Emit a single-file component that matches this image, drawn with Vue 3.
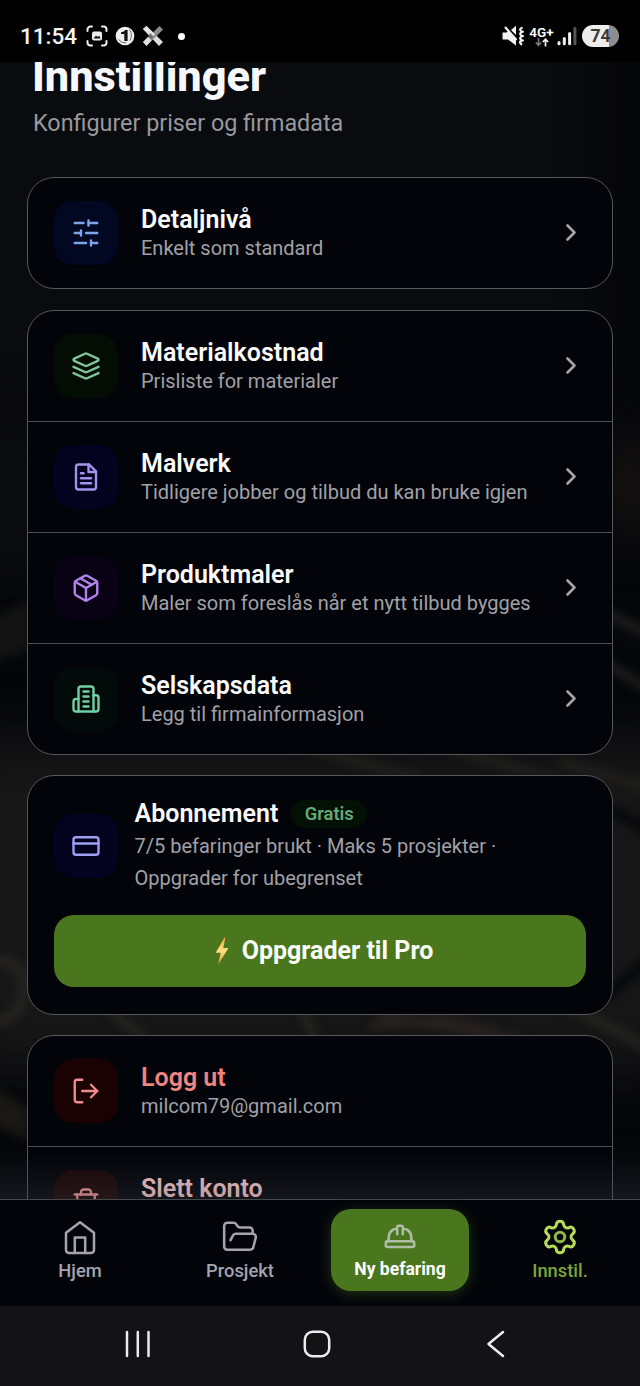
<script setup>
const icons = {
  sliders: ['M21 4h-7', 'M10 4H3', 'M21 12h-9', 'M8 12H3', 'M21 20h-5', 'M12 20H3', 'M14 2v4', 'M8 10v4', 'M16 18v4'],
  layers: [
    'm12.83 2.18a2 2 0 0 0-1.66 0L2.6 6.08a1 1 0 0 0 0 1.83l8.58 3.91a2 2 0 0 0 1.66 0l8.58-3.9a1 1 0 0 0 0-1.83Z',
    'm22 17.65-9.17 4.16a2 2 0 0 1-1.66 0L2 17.65',
    'm22 12.65-9.17 4.16a2 2 0 0 1-1.66 0L2 12.65',
  ],
  file: ['M14.5 2H6a2 2 0 0 0-2 2v16a2 2 0 0 0 2 2h12a2 2 0 0 0 2-2V7.5L14.5 2z', 'M14 2v6h6', 'M10 9H8', 'M16 13H8', 'M16 17H8'],
  box: [
    'm7.5 4.27 9 5.15',
    'M21 8a2 2 0 0 0-1-1.73l-7-4a2 2 0 0 0-2 0l-7 4A2 2 0 0 0 3 8v8a2 2 0 0 0 1 1.73l7 4a2 2 0 0 0 2 0l7-4A2 2 0 0 0 21 16Z',
    'm3.3 7 8.7 5 8.7-5',
    'M12 22V12',
  ],
  building: [
    'M6 22V4a2 2 0 0 1 2-2h8a2 2 0 0 1 2 2v18Z',
    'M6 12H4a2 2 0 0 0-2 2v6a2 2 0 0 0 2 2h2',
    'M18 9h2a2 2 0 0 1 2 2v9a2 2 0 0 1-2 2h-2',
    'M10 6h4', 'M10 10h4', 'M10 14h4', 'M10 18h4',
  ],
  logout: ['M9 21H5a2 2 0 0 1-2-2V5a2 2 0 0 1 2-2h4', 'm16 17 5-5-5-5', 'M21 12H9'],
  trash: ['M3 6h18', 'M19 6v14c0 1-1 2-2 2H7c-1 0-2-1-2-2V6', 'M8 6V4c0-1 1-2 2-2h4c1 0 2 1 2 2v2', 'M10 11v6', 'M14 11v6'],
}

const groups = [
  [{ icon: 'sliders', tone: 'blue', title: 'Detaljnivå', sub: 'Enkelt som standard' }],
  [
    { icon: 'layers', tone: 'green', title: 'Materialkostnad', sub: 'Prisliste for materialer' },
    { icon: 'file', tone: 'indigo', title: 'Malverk', sub: 'Tidligere jobber og tilbud du kan bruke igjen' },
    { icon: 'box', tone: 'purple', title: 'Produktmaler', sub: 'Maler som foreslås når et nytt tilbud bygges' },
    { icon: 'building', tone: 'teal', title: 'Selskapsdata', sub: 'Legg til firmainformasjon' },
  ],
]

const account = [
  { icon: 'logout', tone: 'red', title: 'Logg ut', sub: 'milcom79@gmail.com' },
  { icon: 'trash', tone: 'rose', title: 'Slett konto', sub: '' },
]
</script>

<template>
  <div class="screen">
    <svg class="photo" viewBox="0 0 640 1386" aria-hidden="true">
      <defs>
        <filter id="soft" x="-20%" y="-20%" width="140%" height="140%" color-interpolation-filters="sRGB"><feGaussianBlur stdDeviation="5" /></filter>
        <filter id="wide" x="-50%" y="-50%" width="200%" height="200%" color-interpolation-filters="sRGB"><feGaussianBlur stdDeviation="28" /></filter>
      </defs>
      <g filter="url(#wide)">
        <rect x="-60" y="0" width="660" height="400" fill="#0a0b0e" />
        <rect x="-40" y="420" width="100" height="160" fill="#0c0d0f" />
        <rect x="-50" y="740" width="740" height="330" fill="#171717" />
        <rect x="590" y="440" width="80" height="90" fill="#151210" />
      </g>
      <g filter="url(#soft)" fill="none">
        <path d="M-10 620 L30 600 L30 650 L-10 662Z" fill="#131313" />
        <path d="M600 610 L650 635 M600 660 L650 690 M300 745 L420 780 M440 745 L560 782 M560 762 L650 788" stroke="#21201e" stroke-width="9" />
        <path d="M600 630 L650 652 M610 810 L650 830 M600 1000 L650 960" stroke="#07080c" stroke-width="12" />
        <path d="M-20 962 Q28 955 24 990 T-10 1020" stroke="#272622" stroke-width="9" />
        <path d="M110 1010 L150 1045 M300 1005 L320 1050 M380 1015 L520 1040 M560 1000 L650 1050" stroke="#272622" stroke-width="8" />
        <path d="M370 1026 L440 1020 L500 1034" stroke="#2a2220" stroke-width="8" />
        <path d="M-10 1085 L30 1110 L30 1140 L-10 1125Z" fill="#1a1815" />
      </g>
    </svg>

    <header class="status">
      <div class="status-left">
        <span class="clock">11:54</span>
        <svg class="s-icon" width="22" height="22" viewBox="0 0 22 22" fill="none" stroke="#eee" stroke-width="2" stroke-linecap="round">
          <path d="M1.5 6V4.5a3 3 0 0 1 3-3H6M16 1.5h1.500a3 3 0 0 1 3 3V6M20.500 16v1.500a3 3 0 0 1-3 3H16M6 20.500H4.500a3 3 0 0 1-3-3V16" />
          <rect x="6" y="6.500" width="10" height="9" rx="2" fill="#eee" stroke="none" />
          <path d="M7.500 13.500l2.500-3 1.700 1.500 1.500-1.300 1.500 2.800z" fill="#111" stroke="none" />
        </svg>
        <svg class="s-icon" width="20" height="20" viewBox="0 0 20 20">
          <circle cx="10" cy="10" r="9.300" fill="#f0f0f0" />
          <path d="M6 6.200q3.500-.3 4-2.200h2.600v11H9.300V8H6z" fill="#111" />
          <path d="M14.500 3.500q3.500 5 .5 11M3.500 13.500q3 4 8 3.500" fill="none" stroke="#444" stroke-width=".8" />
        </svg>
        <svg class="s-icon" width="22" height="22" viewBox="0 0 22 22">
          <path d="M1 4l3.500-3L21 17l-4 4z" fill="#dcdcdc" />
          <path d="M17.500 1L21 4.500 4.500 21 1 17z" fill="#8d8d8d" />
          <path d="M1 4l3.500-3 8.500 8.500-3 3z" fill="#e4e4e4" />
          <path d="M1 17l5-5 3.500 3.500-5 5.500z" fill="#e0e0e0" />
          <path d="M8 8l3.500 3.500L9 14l-2.500-2z" fill="#6b6b6b" />
        </svg>
        <span class="dot"></span>
      </div>
      <div class="status-right">
        <svg width="22" height="22" viewBox="0 0 22 22" fill="none">
          <path d="M.5 7.500h4l2-1.700L14 14v6.500L6 14.500H.5z" fill="#f2f2f2" />
          <path d="M9 5L14 .8V10z" fill="#f2f2f2" />
          <path d="M3 2L14.500 15" stroke="#f2f2f2" stroke-width="2.200" />
          <path d="M20.500 2.500c-3.500 1.500-3 3 0 4.300-3.500 1.500-3 3 0 4.300-3.500 1.500-3 3 0 4.300-3.500 1-3 2.800-.5 4.300" stroke="#f2f2f2" stroke-width="2.200" />
        </svg>
        <div class="net">
          <span>4G+</span>
          <svg width="14" height="9" viewBox="0 0 14 9" fill="none" stroke-width="1.700">
            <path d="M3.500 0v7M.8 4.500L3.500 7.300l2.700-2.800" stroke="#777" />
            <path d="M10.500 8.500v-7M7.800 4l2.700-2.800L13.200 4" stroke="#f2f2f2" />
          </svg>
        </div>
        <svg width="20" height="20" viewBox="0 0 20 20" stroke-width="3" stroke-linecap="round">
          <path d="M2 16.500v1.300M7.300 12.500v5.300M12.600 7.500v10.300" stroke="#f2f2f2" />
          <path d="M17.900 2.500v15.300" stroke="#555" />
        </svg>
        <div class="battery"><span>74</span></div>
      </div>
    </header>

    <main class="content">
      <h1>Innstillinger</h1>
      <p class="lead">Konfigurer priser og firmadata</p>

      <section v-for="(group, g) in groups" :key="g" class="card">
        <div v-for="row in group" :key="row.title" class="row">
          <div class="tile" :class="row.tone">
            <svg viewBox="0 0 24 24"><path v-for="d in icons[row.icon]" :key="d" :d="d" /></svg>
          </div>
          <div class="text">
            <h2>{{ row.title }}</h2>
            <p>{{ row.sub }}</p>
          </div>
          <svg class="chevron" viewBox="0 0 24 24"><path d="m9.200 17.200 5.600-5.600-5.600-5.600" /></svg>
        </div>
      </section>

      <section class="card plan">
        <div class="plan-top">
          <div class="tile violet">
            <svg viewBox="0 0 24 24"><rect x="2" y="5" width="20" height="14" rx="2" /><path d="M2 10h20" /></svg>
          </div>
          <div class="plan-text">
            <div class="plan-head"><h2>Abonnement</h2><span class="badge">Gratis</span></div>
            <p>7/5 befaringer brukt · Maks 5 prosjekter ·<br />Oppgrader for ubegrenset</p>
          </div>
        </div>
        <button class="upgrade">
          <svg width="14" height="28" viewBox="0 0 14 28">
            <defs>
              <linearGradient id="bolt" x1="0" y1="0" x2="0" y2="1">
                <stop offset="0" stop-color="#f5a63a" /><stop offset=".5" stop-color="#ffe183" /><stop offset="1" stop-color="#e5902d" />
              </linearGradient>
            </defs>
            <path d="M9.500.5L.7 15.800h5L3.200 27.500 13.500 11H8.300L10.300.8z" fill="url(#bolt)" />
          </svg>
          <span>Oppgrader til Pro</span>
        </button>
      </section>

      <section class="card">
        <div v-for="row in account" :key="row.title" class="row">
          <div class="tile" :class="row.tone">
            <svg viewBox="0 0 24 24"><path v-for="d in icons[row.icon]" :key="d" :d="d" /></svg>
          </div>
          <div class="text" :class="row.tone + '-text'">
            <h2>{{ row.title }}</h2>
            <p v-if="row.sub">{{ row.sub }}</p>
          </div>
        </div>
      </section>
      <div class="fade"></div>
    </main>

    <nav class="tabs">
      <a class="tab">
        <svg width="38" height="38" viewBox="0 0 38 38" stroke-width="2.500">
          <path d="M19 4.200L33 14.800V32a3 3 0 0 1-3 3H8a3 3 0 0 1-3-3V14.800z" /><path d="M13.800 35V19.500h10.400V35" />
        </svg>
        <span>Hjem</span>
      </a>
      <a class="tab">
        <svg width="38" height="38" viewBox="0 0 24 24" stroke-width="1.600">
          <path d="m6 14 1.500-2.900A2 2 0 0 1 9.240 10H20a2 2 0 0 1 1.940 2.500l-1.540 6a2 2 0 0 1-1.950 1.500H4a2 2 0 0 1-2-2V5a2 2 0 0 1 2-2h3.900a2 2 0 0 1 1.690.9l.81 1.200a2 2 0 0 0 1.670.9H18a2 2 0 0 1 2 2v2" />
        </svg>
        <span>Prosjekt</span>
      </a>
      <a class="tab primary">
        <svg width="34" height="34" viewBox="0 0 24 24" stroke-width="1.800">
          <path d="M2 18a1 1 0 0 0 1 1h18a1 1 0 0 0 1-1v-2a1 1 0 0 0-1-1H3a1 1 0 0 0-1 1v2z" />
          <path d="M10 10V5a1 1 0 0 1 1-1h2a1 1 0 0 1 1 1v5M4 15v-3a6 6 0 0 1 6-6M14 6a6 6 0 0 1 6 6v3" />
        </svg>
        <span>Ny befaring</span>
      </a>
      <a class="tab active">
        <svg width="38" height="38" viewBox="0 0 24 24" stroke-width="1.900">
          <path d="M9.671 4.136a2.340 2.340 0 0 1 4.659 0 2.340 2.340 0 0 0 3.319 1.915 2.340 2.340 0 0 1 2.330 4.033 2.340 2.340 0 0 0 0 3.831 2.340 2.340 0 0 1-2.330 4.033 2.340 2.340 0 0 0-3.319 1.915 2.340 2.340 0 0 1-4.659 0 2.340 2.340 0 0 0-3.320-1.915 2.340 2.340 0 0 1-2.330-4.033 2.340 2.340 0 0 0 0-3.831A2.340 2.340 0 0 1 6.350 6.051a2.340 2.340 0 0 0 3.319-1.915" />
          <circle class="hub" cx="12" cy="12" r="3" />
        </svg>
        <span>Innstil.</span>
      </a>
    </nav>

    <footer class="system">
      <svg width="28" height="28" viewBox="0 0 28 28"><path d="M3 2v24M13.800 2v24M24.500 2v24" /></svg>
      <svg width="28" height="28" viewBox="0 0 28 28"><rect x="1.800" y="1.800" width="24.400" height="24.400" rx="8" /></svg>
      <svg width="28" height="28" viewBox="0 0 28 28"><path d="M21 2L6.500 14 21 26" /></svg>
    </footer>
  </div>
</template>

<style>
body { background: #05060a; }
</style>

<style scoped>
.screen {
  position: relative;
  display: flex;
  flex-direction: column;
  width: 640px;
  height: 1386px;
  overflow: hidden;
  background: #05060a;
  color: #fff;
  font-family: Roboto, "Noto Sans", sans-serif;
}
.photo { position: absolute; inset: 0; width: 640px; height: 1386px; }
h1, h2, p { margin: 0; }

.status {
  position: relative;
  z-index: 2;
  display: flex;
  justify-content: space-between;
  align-items: flex-start;
  flex: none;
  height: 62px;
  box-sizing: border-box;
  padding: 25px 21px 0 20px;
  background: #000;
}
.status-left, .status-right { display: flex; align-items: center; height: 22px; }
.clock { width: 66px; font-size: 22.500px; font-weight: 500; color: #f4f4f4; }
.s-icon { margin-right: 7px; }
.dot { width: 7px; height: 7px; margin-left: 7px; border-radius: 50%; background: #fff; }
.net { display: flex; flex-direction: column; align-items: center; width: 27px; margin: 0 2px 0 4px; font-size: 13.500px; line-height: 12px; font-weight: 600; }
.battery {
  display: flex;
  align-items: center;
  justify-content: center;
  width: 37px;
  height: 22px;
  margin-left: 5px;
  border-radius: 11px;
  background: linear-gradient(90deg, #ededed 74%, #8d8d8d 74%);
  color: #3b3b3b;
  font-size: 17.500px;
  font-weight: 700;
}

.content { position: relative; flex: none; height: 1137px; overflow: hidden; padding: 0 27px; }
h1 { margin: -10px 0 0 5px; font-size: 43.300px; line-height: 50px; font-weight: 800; letter-spacing: 0; color: #f7f8fc; }
.lead { margin: 7px 0 40px 6px; font-size: 23.330px; line-height: 28px; color: #97989e; }

.card {
  box-sizing: border-box;
  width: 586px;
  margin-bottom: 20px;
  border: 1px solid #55575b;
  border-radius: 27px;
  background: #030409;
}
.card:first-of-type { margin-bottom: 21px; }
.row { display: flex; align-items: center; height: 110px; padding: 0 26px; }
.row + .row { border-top: 1px solid #4c4e52; }
.tile { display: flex; align-items: center; justify-content: center; flex: none; width: 64px; height: 64px; border-radius: 19px; }
.tile svg, .chevron { width: 30px; height: 30px; fill: none; stroke: currentColor; stroke-width: 1.900; stroke-linecap: round; stroke-linejoin: round; }
.blue { background: #020821; color: #7ca5ee; }
.green { background: #030d03; color: #7fc79a; }
.indigo { background: #03031f; color: #a492ec; }
.purple { background: #090215; color: #b482ee; }
.teal { background: #020b0a; color: #71d0a3; }
.violet { background: #030320; color: #9da0f3; }
.red { background: #1a0203; color: #f08b8b; }
.rose { background: #1a0606; color: #ea9696; }
.text { flex: 1; height: 58px; padding-left: 23px; }
h2 { font-size: 25px; line-height: 30px; font-weight: 600; color: #fafafa; }
.text h2 { padding-top: 1px; line-height: 29px; }
.text p { font-size: 20px; line-height: 28px; color: #a0a1a7; white-space: nowrap; }
.chevron { flex: none; color: #a4a5a9; stroke-width: 2.100; }
.red-text h2 { color: #ee8581; }
.rose-text h2 { color: #f6c6c8; }

.plan { height: 240px; padding: 22px 26px 0; }
.plan-top { display: flex; align-items: center; height: 96px; }
.plan-text { padding-left: 16.500px; }
.plan-head { display: flex; align-items: center; height: 32px; }
.badge { margin-left: 13px; padding: 0 13.500px; border-radius: 14px; background: #031004; color: #66a879; font-size: 18.330px; line-height: 28px; font-weight: 600; }
.plan-text p { font-size: 20px; line-height: 32px; color: #a0a1a7; }
.upgrade {
  display: flex;
  align-items: center;
  justify-content: center;
  gap: 13px;
  width: 532px;
  height: 72px;
  margin-top: 21px;
  padding: 0 0 0 8px;
  border: 0;
  border-radius: 20px;
  background: #4a761e;
  color: #fbfff6;
  font: 700 25px/30px Roboto, sans-serif;
}
.fade {
  position: absolute;
  inset: auto 0 0;
  height: 46px;
  background: linear-gradient(rgba(60, 62, 70, 0), rgba(60, 62, 70, .3));
}

.tabs {
  position: relative;
  display: grid;
  grid-template-columns: repeat(4, 1fr);
  align-items: start;
  flex: none;
  box-sizing: border-box;
  height: 107px;
  border-top: 1px solid #46484c;
  background: #03040a;
}
.tab { display: flex; flex-direction: column; align-items: center; padding-top: 18px; color: #a3a4af; }
.tab svg { fill: none; stroke: currentColor; stroke-linecap: round; stroke-linejoin: round; }
.tab span { margin-top: 4px; font-size: 18.330px; line-height: 22px; font-weight: 500; }
.primary {
  box-sizing: border-box;
  width: 138px;
  height: 82px;
  margin: 9px 0 0 11px;
  padding-top: 11px;
  border-radius: 20px;
  background: #4a761e;
  box-shadow: 0 3px 14px rgba(74, 118, 30, .4);
  color: #b0bea7;
}
.primary span { margin-top: 4px; font-size: 17.500px; font-weight: 700; color: #fff; }
.active { color: #b4dc58; }
.active .hub { stroke: #8fb845; }
.active span { color: #7da63a; }

.system { position: relative; display: flex; align-items: center; flex: 1; padding: 0 0 4px 123.500px; gap: 151px; background: #131315; box-sizing: border-box; }
.system svg { fill: none; stroke: #ececec; stroke-width: 2.500; stroke-linecap: round; stroke-linejoin: round; }
</style>
